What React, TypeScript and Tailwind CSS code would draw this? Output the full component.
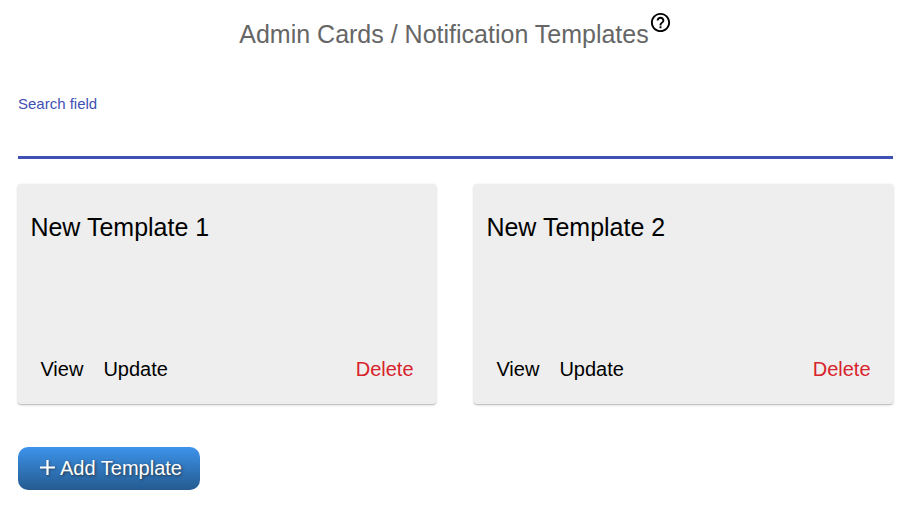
import { MdHelpOutline } from "react-icons/md";

function Card({ title }: { title: string }) {
  return (
    <article className="flex h-[220px] flex-col rounded-[3px] bg-[#eeeeee] pt-[28px] shadow-[0_1px_3px_rgba(0,0,0,0.18),0_1px_1px_rgba(0,0,0,0.14)]">
      <h2 className="pl-[12.4px] text-[25px] leading-[30px]">{title}</h2>
      <div className="mt-auto mb-[23px] flex pr-[22.5px] pl-[22.4px] text-[20px] leading-6">
        <button className="mr-5">View</button>
        <button>Update</button>
        <button className="ml-auto text-[#d8232a]">Delete</button>
      </div>
    </article>
  );
}

export default function App() {
  return (
    <main className="h-[513px] w-[917px] overflow-hidden bg-white pr-6 pl-[18px] font-['Liberation_Sans',Arial,sans-serif] text-black">
      <header className="flex h-[94px] items-start justify-center pt-[11px]">
        <h1 className="mt-[8px] text-[25px] leading-[30px] text-[#666666]">Admin Cards / Notification Templates</h1>
        <MdHelpOutline className="size-[23px]" />
      </header>
      <div className="h-[65px] border-b-[3px] border-[#3f51b5]">
        <label className="block text-[15px] leading-5 text-[#3f51b5]">Search field</label>
      </div>
      <section className="mt-[25px] grid grid-cols-[418px_419px] gap-[38px]">
        <Card title="New Template 1" />
        <Card title="New Template 2" />
      </section>
      <button className="mt-[43px] flex h-[43px] w-[182px] items-center rounded-[10px] bg-linear-to-b from-[#3d94ec] to-[#245b90] pb-[2px] pl-[22px] text-[20px] text-white [text-shadow:1px_1px_3px_rgba(40,40,40,0.85)]">
        <svg className="mr-[5px] size-[15px] drop-shadow-[1px_1px_1px_rgba(40,40,40,0.6)]" viewBox="0 0 15 15" stroke="currentColor" strokeWidth="2.2"><path d="M7.5 0v15M0 7.5h15" /></svg>
        Add Template
      </button>
    </main>
  );
}
